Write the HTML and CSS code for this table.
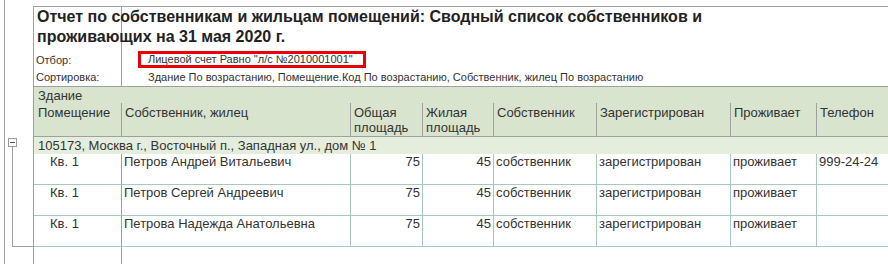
FILE: index.html
```html
<!DOCTYPE html>
<html lang="ru">
<head>
<meta charset="utf-8">
<title>Отчет по собственникам и жильцам помещений</title>
<link rel="stylesheet" href="styles.css">
</head>
<body>
<div class="sheet">
  <div class="head">
    <h1 class="title">Отчет по собственникам и жильцам помещений: Сводный список собственников и<br>проживающих на 31 мая 2020 г.</h1>
    <div class="params">
      <div class="label">Отбор:</div>
      <div class="value"><span class="filter">Лицевой счет Равно "л/с №2010001001"</span></div>
      <div class="label">Сортировка:</div>
      <div class="value plain">Здание По возрастанию, Помещение.Код По возрастанию, Собственник, жилец По возрастанию</div>
    </div>
  </div>

  <div class="tree">
    <div class="toggle"></div>
    <div class="branch"></div>
  </div>

  <div class="report">
    <div class="hrow-top"><div class="cell">Здание</div></div>
    <div class="hrow">
      <div class="cell first">Помещение</div>
      <div class="cell">Собственник, жилец</div>
      <div class="cell">Общая<br>площадь</div>
      <div class="cell">Жилая<br>площадь</div>
      <div class="cell">Собственник</div>
      <div class="cell">Зарегистрирован</div>
      <div class="cell">Проживает</div>
      <div class="cell">Телефон</div>
    </div>
    <div class="grow"><div class="cell">105173, Москва г., Восточный п., Западная ул., дом № 1</div></div>
    <div class="drow">
      <div class="cell first">Кв. 1</div>
      <div class="cell">Петров Андрей Витальевич</div>
      <div class="cell num">75</div>
      <div class="cell num">45</div>
      <div class="cell">собственник</div>
      <div class="cell">зарегистрирован</div>
      <div class="cell">проживает</div>
      <div class="cell">999-24-24</div>
    </div>
    <div class="drow">
      <div class="cell first">Кв. 1</div>
      <div class="cell">Петров Сергей Андреевич</div>
      <div class="cell num">75</div>
      <div class="cell num">45</div>
      <div class="cell">собственник</div>
      <div class="cell">зарегистрирован</div>
      <div class="cell">проживает</div>
      <div class="cell"></div>
    </div>
    <div class="drow">
      <div class="cell first">Кв. 1</div>
      <div class="cell">Петрова Надежда Анатольевна</div>
      <div class="cell num">75</div>
      <div class="cell num">45</div>
      <div class="cell">собственник</div>
      <div class="cell">зарегистрирован</div>
      <div class="cell">проживает</div>
      <div class="cell"></div>
    </div>
  </div>
</div>
</body>
</html>
```

FILE: styles.css
```css
html, body {
  margin: 0;
  padding: 0;
}

body {
  width: 888px;
  height: 264px;
  overflow: hidden;
  background: #fff;
  font-family: "Liberation Sans", Arial, sans-serif;
  color: #333;
}

.sheet {
  display: grid;
  grid-template-columns: 33px 1fr;
  grid-template-rows: auto 1fr;
  height: 264px;
  overflow: hidden;
  background:
    linear-gradient(#a0a0a0, #a0a0a0) 4px 0 / 1px 100% no-repeat,
    linear-gradient(#a0a0a0, #a0a0a0) 33px 6px / 1px 100% no-repeat,
    linear-gradient(#a0a0a0, #a0a0a0) 121px 6px / 1px 100% no-repeat,
    linear-gradient(#a0a0a0, #a0a0a0) 33px 6px / 100% 1px no-repeat,
    #fff;
}

.head {
  grid-area: 1 / 2;
  padding-top: 7px;
  padding-bottom: 1px;
}

.title {
  margin: 0 0 4px;
  padding-left: 4px;
  font-size: 16px;
  line-height: 20px;
  font-weight: bold;
  color: #222;
  white-space: nowrap;
}

.params {
  display: grid;
  grid-template-columns: 105px 1fr;
  grid-auto-rows: 17px;
  align-items: center;
  font-size: 11px;
  line-height: 12px;
  color: #333;
}

.label {
  padding-left: 3px;
}

.value {
  white-space: nowrap;
}

.value.plain {
  padding-left: 10px;
}

.filter {
  display: inline-block;
  border: 3px solid #e8000b;
  padding: 0 10px 0 7px;
  line-height: 11px;
  height: 11px;
}

/* tree control in the left gutter */
.tree {
  grid-area: 2 / 1;
  padding-top: 52px;
}

.toggle {
  box-sizing: border-box;
  width: 9px;
  height: 9px;
  margin-left: 8px;
  border: 1px solid #9a9a9a;
  background: #fff;
  display: flex;
  align-items: center;
  justify-content: center;
}

.toggle::before {
  content: "";
  width: 5px;
  height: 1px;
  background: #555;
}

.branch {
  margin-left: 12px;
  width: 20px;
  height: 99px;
  border-left: 1px solid #a0a0a0;
  border-bottom: 1px solid #a0a0a0;
}

/* report table */
.report {
  grid-area: 2 / 2;
  width: 865px;
  border-left: 1px solid #a0a0a0;
  font-size: 13px;
  line-height: 15px;
  color: #333;
}

.cell {
  box-sizing: border-box;
  padding-left: 3px;
  white-space: nowrap;
  overflow: hidden;
}

.hrow-top {
  box-sizing: border-box;
  height: 17px;
  border-top: 1px solid #a0a0a0;
  background: #d8e4cd;
}

.hrow-top .cell {
  padding: 1px 0 0 4px;
}

.hrow,
.drow {
  display: grid;
  grid-template-columns: 88px 229px 72px 71px 103px 134px 86px 80px;
}

.hrow {
  box-sizing: border-box;
  height: 34px;
  background: #d8e4cd;
  border-bottom: 1px solid #a0a0a0;
}

.hrow .cell {
  border-right: 1px solid #a0a0a0;
  padding-top: 2px;
}

.hrow .cell.first {
  padding-left: 4px;
}

.grow {
  height: 17px;
  background: #e5eedd;
}

.grow .cell {
  padding: 1px 0 0 4px;
}

.drow {
  height: 31px;
}

.drow .cell {
  border-right: 1px solid #a6c9bf;
  border-bottom: 1px solid #a6c9bf;
  padding-left: 2px;
}

.drow .cell.first {
  border-right-color: #a0a0a0;
  padding-left: 16px;
}

.drow .cell.num {
  text-align: right;
  padding-right: 2px;
}
```
